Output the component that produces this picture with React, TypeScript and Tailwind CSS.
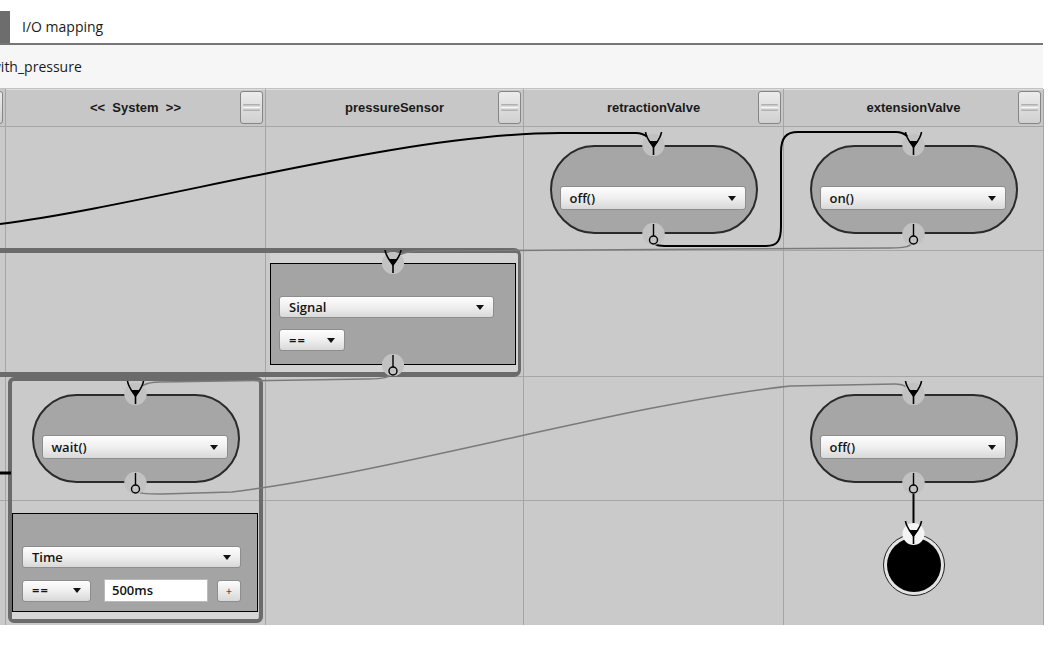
import React from 'react';

// grid placement classes, written out so tailwind picks them up
const COL = ['col-start-1', 'col-start-2', 'col-start-3', 'col-start-4', 'col-start-5'];
const ROW = ['row-start-1', 'row-start-2', 'row-start-3', 'row-start-4', 'row-start-5'];

const headers = ['', '<<  System  >>', 'pressureSensor', 'retractionValve', 'extensionValve'];

function Caret() {
    return (
        <svg width="8" height="5" viewBox="0 0 8 5" className="shrink-0">
            <path d="M0 0 H8 L4 5 Z" fill="#111" />
        </svg>
    );
}

function Dropdown({ label, className = '' }: { label: string; className?: string }) {
    return (
        <div
            className={`flex items-center justify-between rounded-[3px] border border-[#8d8d8d] bg-linear-to-b from-[#fdfdfd] via-[#efefef] to-[#d8d8d8] pl-[9px] pr-[9px] text-[13px] font-semibold leading-none text-[#141414] ${className}`}
        >
            <span>{label}</span>
            <Caret />
        </div>
    );
}

function HeaderButton() {
    return (
        <div className="flex h-[33px] w-[23px] shrink-0 flex-col justify-center rounded-[3px] border border-[#858585] bg-linear-to-b from-[#ececec] to-[#d0d0d0] px-[2px]">
            <div className="h-[7px] rounded-[1px] bg-linear-to-b from-[#a4a4a4] via-[#f6f6f6] to-[#a4a4a4]" />
        </div>
    );
}

function HeaderCell({ label, index }: { label: string; index: number }) {
    if (index === 0) {
        return (
            <div className={`${COL[0]} ${ROW[0]} flex items-center justify-end overflow-hidden bg-[#c7c7c7] pr-[2px]`}>
                <HeaderButton />
            </div>
        );
    }
    return (
        <div
            className={`${COL[index]} ${ROW[0]} grid grid-cols-[25px_1fr_25px] items-center bg-[#c7c7c7] shadow-[inset_0_1px_0_#dedede]`}
        >
            <div />
            <div className="whitespace-pre text-center font-['Liberation_Sans',Arial,sans-serif] text-[13px] font-bold text-[#1a1a1a]">
                {label}
            </div>
            <HeaderButton />
        </div>
    );
}

function ActionNode({ label, className }: { label: string; className: string }) {
    return (
        <div
            className={`flex h-[89px] w-[208px] flex-col self-start justify-self-center rounded-full border-2 border-[#2a2a2a] bg-[#a6a6a6] pl-[8px] pr-[10px] pt-[39px] ${className}`}
        >
            <Dropdown label={label} className="h-[24px]" />
        </div>
    );
}

function InPort({ x, y, fill = '#c2c2c2' }: { x: number; y: number; fill?: string }) {
    return (
        <g transform={`translate(${x} ${y})`}>
            <circle r="11" fill={fill} />
            <path d="M-8 -13 C-7 -6 -3 -3 0 2 M8 -13 C7 -6 3 -3 0 2" stroke="#000" strokeWidth="1.6" fill="none" />
            <path d="M-5 -4 L5 -4 L0 3 Z" fill="#000" />
            <path d="M0 0 L0 10" stroke="#000" strokeWidth="1.6" />
        </g>
    );
}

function OutPort({ x, y }: { x: number; y: number }) {
    return (
        <g transform={`translate(${x} ${y})`}>
            <circle r="11" fill="#c2c2c2" />
            <path d="M0 -10 L0 2" stroke="#000" strokeWidth="1.4" />
            <circle cy="6" r="4" fill="none" stroke="#000" strokeWidth="1.4" />
        </g>
    );
}

function Wires() {
    return (
        <svg className="pointer-events-none absolute inset-0" width="1051" height="649" viewBox="0 0 1051 649">
            {/* port notches */}
            <circle cx="653.5" cy="145" r="11" fill="#c2c2c2" />
            <circle cx="913.5" cy="145" r="11" fill="#c2c2c2" />
            <circle cx="653.5" cy="234" r="11" fill="#c2c2c2" />
            <circle cx="913.5" cy="234" r="11" fill="#c2c2c2" />
            <circle cx="393" cy="263" r="11" fill="#c2c2c2" />
            <circle cx="393" cy="365" r="11" fill="#c2c2c2" />
            <circle cx="135.5" cy="394" r="11" fill="#c2c2c2" />
            <circle cx="135.5" cy="483" r="11" fill="#c2c2c2" />
            <circle cx="913.5" cy="394" r="11" fill="#c2c2c2" />
            <circle cx="913.5" cy="483" r="11" fill="#c2c2c2" />

            {/* black transitions */}
            <g fill="none" stroke="#000" strokeWidth="2">
                <path d="M0 224 C150 205 400 133 560 133 L636 133 C646 133 651 139 653.5 148" />
                <path d="M653.5 240 C654 246 659 246 668 246 L766 246 C778 246 781 240 781 226 L781 152 C781 138 786 132 798 132 L896 132 C906 132 911 139 913.5 148" />
                <path d="M913.5 489 L913.5 534" />
                <path d="M0 473 H11" strokeWidth="3" />
            </g>
            {/* gray transitions */}
            <g fill="none" stroke="#7a7a7a" strokeWidth="1.5">
                <path d="M913.5 240 C912 247 905 248 890 248 L420 251 C402 251 395 256 393 265" />
                <path d="M393 371 C391 378 382 379 368 379 L160 382 C144 382 137 387 135.5 396" />
                <path d="M135.5 489 C137 494 146 494 162 494 L232 492 C400 471 620 405 790 386 L895 384 C906 384 911 389 913.5 397" />
            </g>

            <InPort x={653.5} y={145} />
            <InPort x={913.5} y={145} />
            <OutPort x={653.5} y={234} />
            <OutPort x={913.5} y={234} />
            <InPort x={393} y={263} />
            <OutPort x={393} y={365} />
            <InPort x={135.5} y={394} />
            <OutPort x={135.5} y={483} />
            <InPort x={913.5} y={394} />
            <OutPort x={913.5} y={483} />
            <InPort x={913.5} y={534} fill="#f4f4f4" />
        </svg>
    );
}

export default function App() {
    const cells: React.ReactNode[] = [];
    for (let r = 1; r < 5; r++) {
        for (let c = 0; c < 5; c++) {
            cells.push(<div key={`${r}-${c}`} className={`${COL[c]} ${ROW[r]} bg-[#cacaca]`} />);
        }
    }

    return (
        <div className="relative h-[649px] w-[1051px] overflow-hidden bg-white font-['Open_Sans',sans-serif] text-[#1b1b1b]">
            <div className="w-[1044px]">
                {/* tab strip */}
                <div className="flex h-[45px] w-[1043px] border-b-2 border-[#767676]">
                    <div className="mt-[11px] w-[10px] bg-[#6d6d6d]" />
                    <div className="flex items-center pl-[12px] pt-[9px] text-[14px]">I/O mapping</div>
                </div>
                {/* state machine name, scrolled a little to the right */}
                <div className="flex h-[44px] w-[1043px] items-center overflow-hidden border-b border-[#c2c2c2] bg-[#f6f6f6] text-[14px]">
                    <span className="-ml-[10px]">with_pressure</span>
                </div>

                {/* swimlane grid */}
                <div className="grid w-[1044px] grid-cols-[5px_259px_257px_259px_259px] grid-rows-[37px_123px_125px_123px_124px] gap-px border-r border-[#a6a6a6] bg-[#a6a6a6]">
                    {headers.map((h, i) => (
                        <HeaderCell key={i} label={h} index={i} />
                    ))}
                    {cells}

                    {/* pressureSensor guard group */}
                    <div className="col-span-3 col-start-1 row-start-3 -mb-[1px] mr-[2px] -ml-[12px] -mt-[3px] rounded-[7px] border-[5px] border-[#6b6b6b]" />
                    <div className="col-start-3 row-start-3 mb-[4px] ml-[4px] mr-[5px] mt-[2px] rounded-[2px] bg-[#d3d3d3] pb-[7px] pr-[2px] pt-[10px]">
                        <div className="flex h-full flex-col gap-[11px] border border-black bg-[#a4a4a4] pl-[8px] pt-[32px]">
                            <Dropdown label="Signal" className="h-[22px] w-[215px]" />
                            <Dropdown label="==" className="h-[22px] w-[66px] tracking-[1px]" />
                        </div>
                    </div>

                    {/* System wait group */}
                    <div className="col-start-2 row-span-2 row-start-4 mb-[2px] ml-[2px] mr-[2px] rounded-[6px] border-4 border-[#6b6b6b]" />
                    <div className="col-start-2 row-start-5 mb-[6px] ml-[6px] mr-[7px] mt-[12px] bg-[#d6d6d6] pb-[7px]">
                        <div className="flex h-full flex-col gap-[11px] border border-black bg-[#a4a4a4] pl-[9px] pt-[32px]">
                            <Dropdown label="Time" className="h-[22px] w-[219px]" />
                            <div className="flex items-center">
                                <Dropdown label="==" className="h-[22px] w-[69px] tracking-[1px]" />
                                <div className="ml-[13px] flex h-[23px] w-[104px] items-center border border-[#b9b9b9] bg-white pl-[7px] text-[13px] font-semibold leading-none text-[#141414]">
                                    500ms
                                </div>
                                <div className="ml-[9px] flex h-[22px] w-[24px] items-center justify-center rounded-[3px] border border-[#8d8d8d] bg-linear-to-b from-[#fdfdfd] to-[#d8d8d8] text-[11px] leading-none">
                                    +
                                </div>
                            </div>
                        </div>
                    </div>

                    <ActionNode label="off()" className="col-start-4 row-start-2 mt-[18px]" />
                    <ActionNode label="on()" className="col-start-5 row-start-2 mt-[18px]" />
                    <ActionNode label="wait()" className="col-start-2 row-start-4 mt-[17px]" />
                    <ActionNode label="off()" className="col-start-5 row-start-4 mt-[17px]" />

                    {/* final state */}
                    <div className="col-start-5 row-start-5 mt-[33px] h-[62px] w-[62px] self-start justify-self-center rounded-full border-[1.5px] border-[#222] bg-[#e4e4e4] p-[3px]">
                        <div className="h-full w-full rounded-full bg-black" />
                    </div>
                </div>
            </div>
            <Wires />
        </div>
    );
}
